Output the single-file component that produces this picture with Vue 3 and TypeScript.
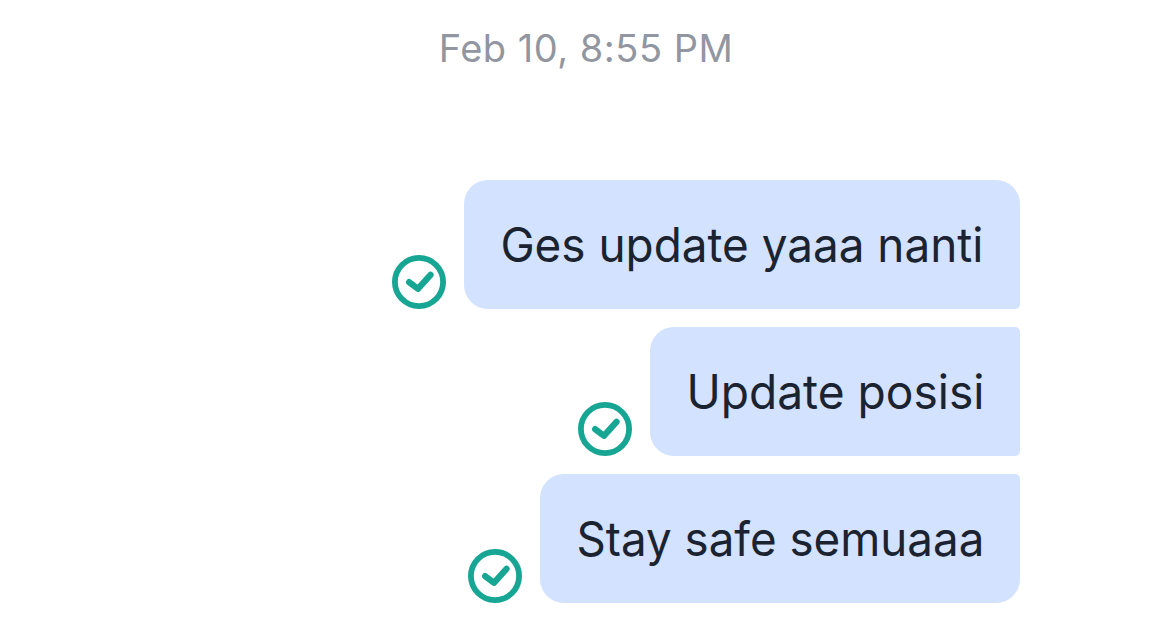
<script setup lang="ts">
interface Message {
  text: string
  width: number
  textWidth: number
}

const messages: Message[] = [
  { text: 'Ges update yaaa nanti', width: 556, textWidth: 483 },
  { text: 'Update posisi', width: 370, textWidth: 298 },
  { text: 'Stay safe semuaaa', width: 480, textWidth: 408 },
]
</script>

<template>
  <main class="chat">
    <time class="stamp">Feb 10, 8:55 PM</time>
    <section class="thread">
      <div v-for="m in messages" :key="m.text" class="row">
        <svg class="check" viewBox="0 0 54 54" aria-hidden="true">
          <circle cx="27" cy="27" r="24.1" />
          <path d="M17.2 27.2 L25.9 33.8 L38.5 19.9" />
        </svg>
        <div class="bubble" :style="{ width: m.width + 'px' }">
          <svg class="line" :width="m.textWidth" height="64">
            <text x="-0.6" y="35" :textLength="m.textWidth" lengthAdjust="spacingAndGlyphs">{{ m.text }}</text>
          </svg>
        </div>
      </div>
    </section>
  </main>
</template>

<style scoped>
.chat {
  width: 1169px;
  height: 623px;
  box-sizing: border-box;
  overflow: hidden;
  padding-top: 23px;
  background: #fff;
  font-family: Inter, "Liberation Sans", sans-serif;
}
.stamp {
  display: block;
  height: 50px;
  line-height: 50px;
  padding-left: 3px;
  text-align: center;
  font-size: 38px;
  letter-spacing: 0.5px;
  color: #9196a0;
}
.thread {
  display: flex;
  flex-direction: column;
  gap: 18px;
  margin-top: 107px;
  padding-right: 149px;
}
.row {
  display: flex;
  justify-content: flex-end;
  align-items: flex-end;
  gap: 18px;
}
.check {
  display: block;
  width: 54px;
  height: 54px;
  fill: none;
  stroke: #17a693;
  stroke-width: 5.8;
}
.check path {
  stroke-width: 6.3;
  stroke-linecap: round;
  stroke-linejoin: round;
}
.bubble {
  box-sizing: border-box;
  height: 129px;
  padding: 47px 0 0 37px;
  border-radius: 24px 5px 5px 24px;
  background: #d2e2ff;
}
.row:first-child .bubble {
  border-top-right-radius: 24px;
}
.row:last-child .bubble {
  border-bottom-right-radius: 24px;
}
.line {
  display: block;
  overflow: visible;
}
.line text {
  font-size: 47.5px;
  fill: #1c2330;
}
</style>
